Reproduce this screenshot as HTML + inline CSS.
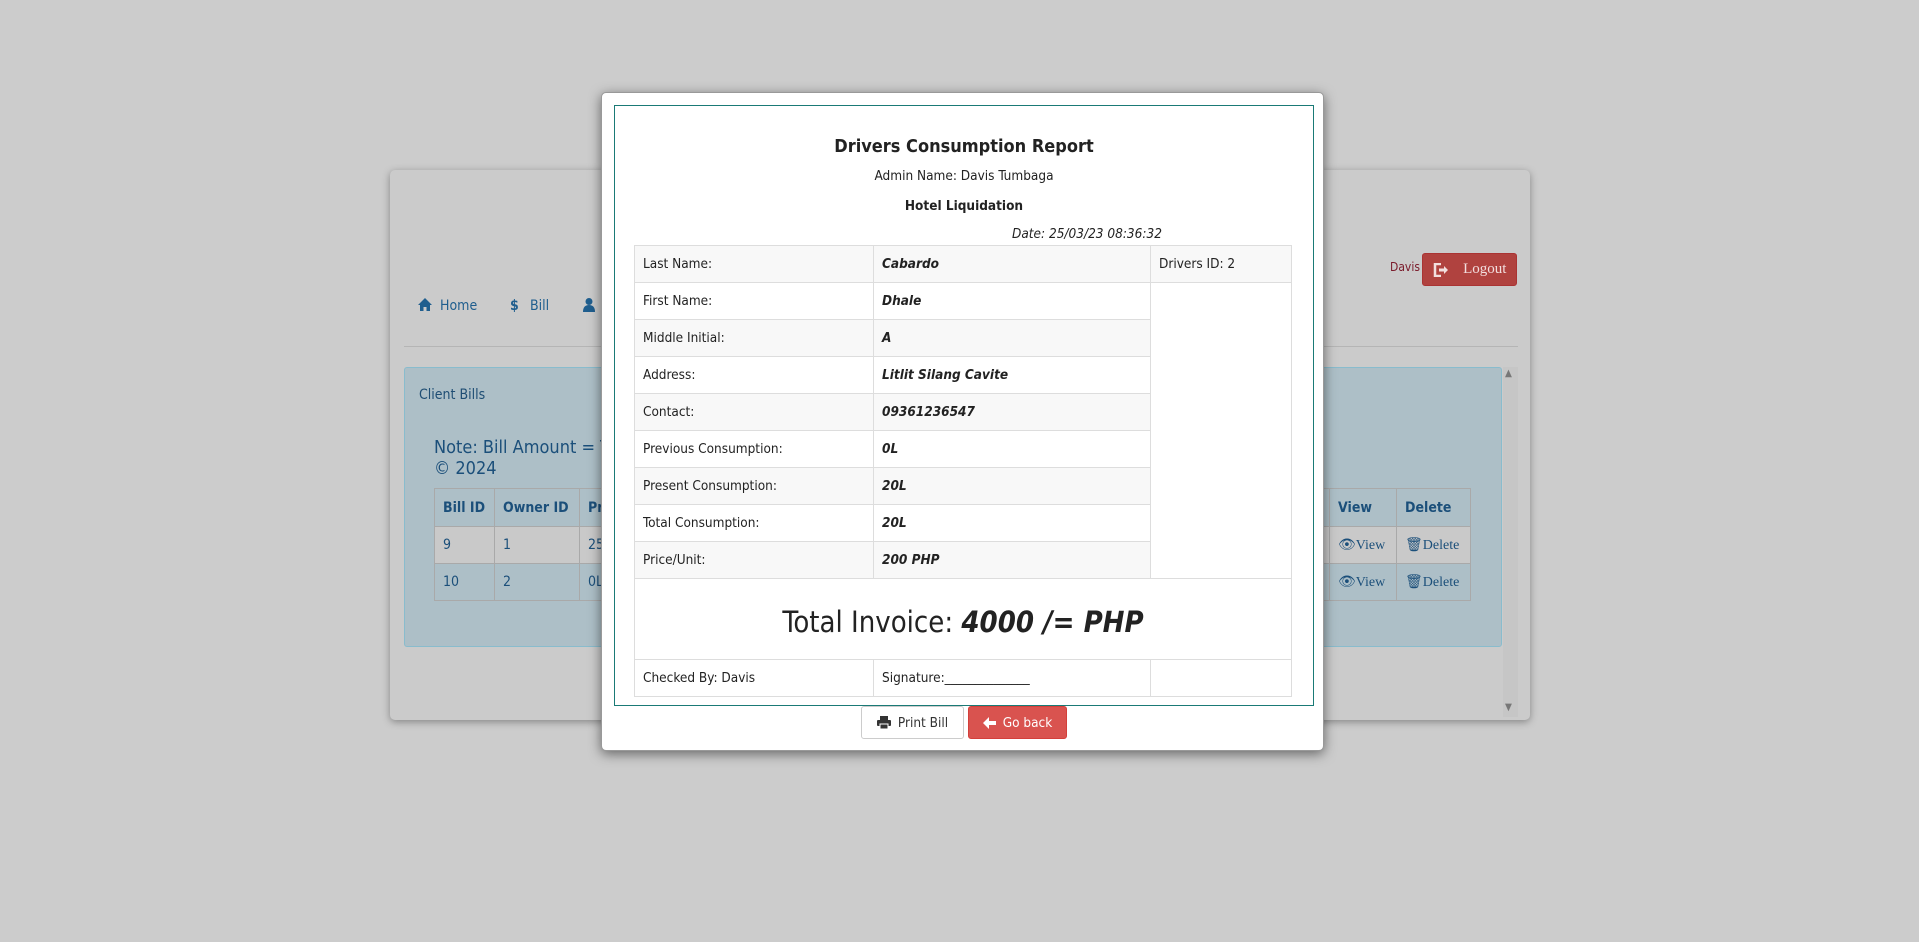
<!DOCTYPE html>
<html><head><meta charset="utf-8"><style>
*{box-sizing:border-box;margin:0;padding:0}
body{width:1919px;height:942px;background:#cccccc;font-family:"DejaVu Sans Condensed","DejaVu Sans","Liberation Sans",sans-serif;position:relative;overflow:hidden;color:#222}
.abs{position:absolute}
.panel{left:390px;top:170px;width:1140px;height:550px;background:#cbcbcb;border-radius:5px;box-shadow:0 2px 8px rgba(0,0,0,.35)}
.nav{color:#1f5e8e;font-size:14px;top:298px}
.blue{left:404px;top:367px;width:1098px;height:280px;background:#adbfc7;border:1px solid #89bccd;border-radius:3px}
table{border-collapse:collapse}
.bt td{border:1px solid #a9a9a9;color:#1b4f7a;font-size:14px;padding:0 8px;height:37px}
.bt tr.h td{font-weight:bold;height:38px}
.modal{left:601px;top:92px;width:723px;height:659px;background:#fff;border-radius:5px;box-shadow:0 3px 12px rgba(0,0,0,.5);border:1px solid #999}
.inner{left:12px;top:12px;width:700px;height:601px;border:1px solid #1a7a76}
.rt td{border:1px solid #ddd;font-size:13.5px;padding:0 8px;height:37px;color:#222}
.rt tr.g td{background:#f8f8f8}
.rt td.v{font-weight:bold;font-style:italic}
.btn{height:33px;border-radius:3px;font-size:13.5px;display:flex;align-items:center;justify-content:center;gap:7px}
</style></head><body>
<div class="abs panel"></div>
<svg class="abs" style="left:417px;top:297px" width="16" height="15" viewBox="0 0 16 15"><path d="M8 1 L1 8 H3 V14 H6.5 V10 H9.5 V14 H13 V8 H15 Z" fill="#1f5e8e"/></svg>
<div class="abs nav" style="left:440px">Home</div>
<div class="abs nav" style="left:510px;font-weight:bold">$</div>
<div class="abs nav" style="left:530px">Bill</div>
<svg class="abs" style="left:582px;top:297px" width="14" height="15" viewBox="0 0 14 15"><circle cx="7" cy="4.5" r="3.5" fill="#1f5e8e"/><path d="M1 15 Q1 8 7 8 Q13 8 13 15 Z" fill="#1f5e8e"/></svg>
<div class="abs" style="left:404px;top:346px;width:1114px;height:1px;background:#b5b5b5"></div>
<div class="abs" style="left:1390px;top:260px;font-size:12px;color:#7a1a2a">Davis</div>
<div class="abs btn" style="left:1422px;top:253px;width:95px;background:#b0423f;border:1px solid #a33;color:#f2dede;font-family:'Liberation Serif',serif;font-size:15px;height:33px"><svg width="16" height="14" viewBox="0 0 16 14"><path d="M8 1H2V13H8" stroke="#f2dede" stroke-width="2.5" fill="none"/><path d="M6 5.5H11V3L15 7L11 11V8.5H6Z" fill="#f2dede"/></svg>&nbsp;&nbsp;Logout</div>
<div class="abs blue"></div>
<div class="abs" style="left:419px;top:387px;font-size:14px;color:#1f4e74">Client Bills</div>
<div class="abs" style="left:434px;top:437px;font-size:18px;color:#1b4f7a;line-height:21px">Note: Bill Amount = Total<br>© 2024</div>
<table class="abs bt" style="left:434px;top:488px;width:1037px">
<tr class="h"><td style="width:60px">Bill ID</td><td style="width:85px">Owner ID</td><td>Pr</td><td style="width:67px">View</td><td style="width:74px">Delete</td></tr>
<tr style="background:#c9c9c9"><td>9</td><td>1</td><td>25</td><td style="font-family:'Liberation Serif',serif">👁View</td><td style="font-family:'Liberation Serif',serif">🗑Delete</td></tr>
<tr><td>10</td><td>2</td><td>0L</td><td style="font-family:'Liberation Serif',serif">👁View</td><td style="font-family:'Liberation Serif',serif">🗑Delete</td></tr>
</table>
<div class="abs" style="left:1503px;top:367px;width:15px;height:350px;background:#c6c6c6"></div>
<div class="abs" style="left:1505px;top:368px;font-size:10px;color:#777">▲</div>
<div class="abs" style="left:1505px;top:702px;font-size:10px;color:#777">▼</div>

<div class="abs modal">
<div class="abs inner">
<div class="abs" style="left:0;width:100%;top:30px;text-align:center;font-size:18px;font-weight:bold">Drivers Consumption Report</div>
<div class="abs" style="left:0;width:100%;top:62px;text-align:center;font-size:13.5px">Admin Name: Davis Tumbaga</div>
<div class="abs" style="left:0;width:100%;top:92px;text-align:center;font-size:13.5px;font-weight:bold">Hotel Liquidation</div>
<div class="abs" style="left:397px;top:120px;font-size:13.5px;font-style:italic">Date: 25/03/23 08:36:32</div>
<table class="abs rt" style="left:19px;top:139px;width:658px">
<tr class="g"><td style="width:239px">Last Name:</td><td class="v" style="width:277px">Cabardo</td><td>Drivers ID: 2</td></tr>
<tr><td>First Name:</td><td class="v">Dhale</td><td rowspan="8" style="background:#fff"></td></tr>
<tr class="g"><td>Middle Initial:</td><td class="v">A</td></tr>
<tr><td>Address:</td><td class="v">Litlit Silang Cavite</td></tr>
<tr class="g"><td>Contact:</td><td class="v">09361236547</td></tr>
<tr><td>Previous Consumption:</td><td class="v">0L</td></tr>
<tr class="g"><td>Present Consumption:</td><td class="v">20L</td></tr>
<tr><td>Total Consumption:</td><td class="v">20L</td></tr>
<tr class="g"><td>Price/Unit:</td><td class="v">200 PHP</td></tr>
<tr><td colspan="3" style="height:81px;text-align:center;font-size:29px;padding-top:6px">Total Invoice: <b><i>4000 /= PHP</i></b></td></tr>
<tr><td>Checked By: Davis</td><td>Signature:______________</td><td></td></tr>
</table>
</div>
<div class="abs btn" style="left:259px;top:613px;width:103px;border:1px solid #ccc;background:#fff;color:#333"><svg width="14" height="13" viewBox="0 0 14 13"><rect x="3" y="0" width="8" height="4" fill="#333"/><rect x="0" y="4" width="14" height="6" rx="1" fill="#333"/><rect x="3" y="8" width="8" height="5" fill="#333" stroke="#fff" stroke-width="1"/></svg>Print Bill</div>
<div class="abs btn" style="left:366px;top:613px;width:99px;background:#d9534f;color:#fff;border:1px solid #d43f3a"><svg width="13" height="12" viewBox="0 0 13 12"><path d="M6 0L0 6L6 12V8H13V4H6Z" fill="#fff"/></svg> Go back</div>
</div>
</body></html>
